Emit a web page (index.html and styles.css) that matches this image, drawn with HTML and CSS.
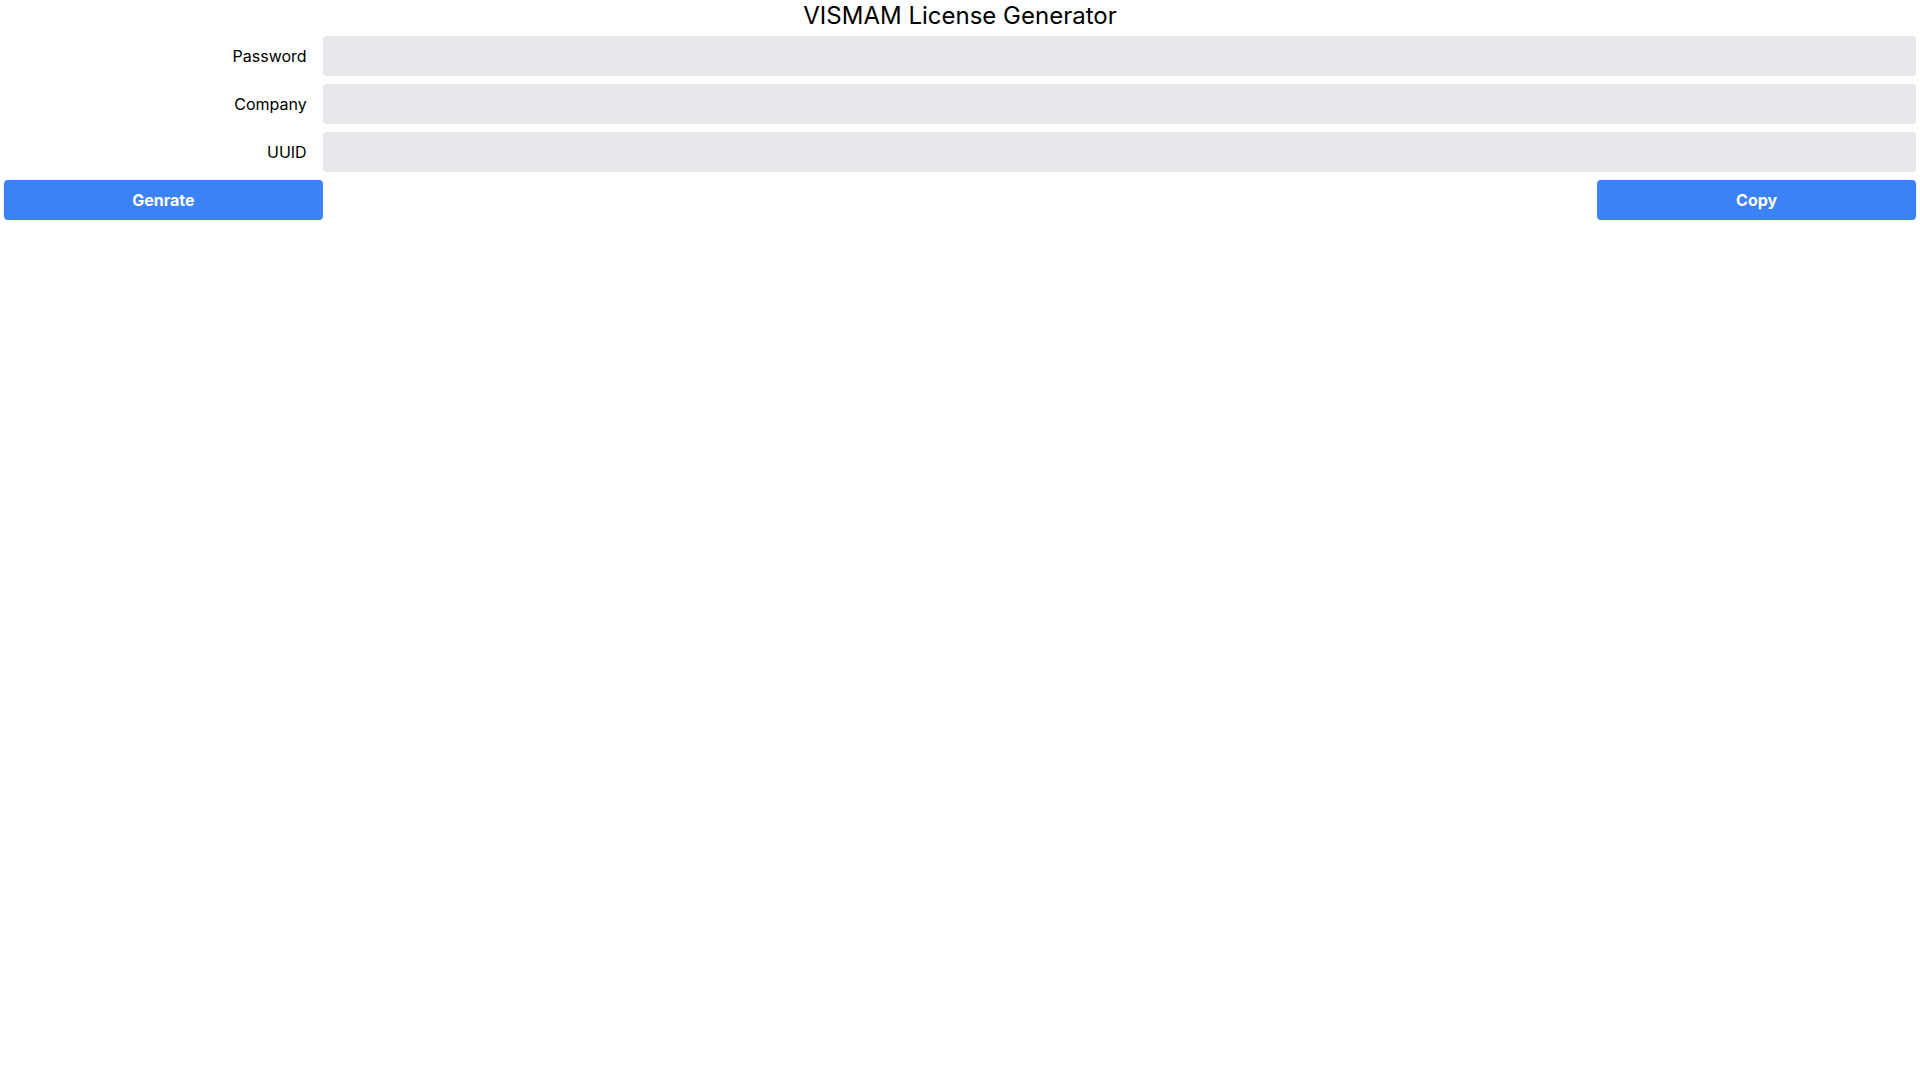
FILE: index.html
```html
<!DOCTYPE html>
<html lang="en">
<head>
<meta charset="utf-8">
<title>VISMAM License Generator</title>
<link rel="stylesheet" href="styles.css">
</head>
<body>
<h1 class="title">VISMAM License Generator</h1>
<form class="form">
  <label class="label" for="pw">Password</label>
  <input class="field" id="pw" type="password">
  <label class="label" for="co">Company</label>
  <input class="field" id="co" type="text">
  <label class="label" for="uu">UUID</label>
  <input class="field" id="uu" type="text">
  <button class="btn btn-gen" type="button">Genrate</button>
  <button class="btn btn-copy" type="button">Copy</button>
</form>
</body>
</html>
```
FILE: styles.css
```css
* { box-sizing: border-box; }
html, body { margin: 0; padding: 0; background: #fff; }
body { font-family: Inter, "Noto Sans", sans-serif; color: #000; }
.title {
  margin: 0;
  font-size: 24px;
  line-height: 32px;
  font-weight: 400;
  text-align: center;
}
.form {
  display: grid;
  grid-template-columns: repeat(6, 1fr);
  row-gap: 8px;
  padding: 4px;
}
.label {
  grid-column: span 1;
  display: flex;
  align-items: center;
  justify-content: flex-end;
  padding-right: 16px;
  font-size: 16px;
  height: 40px;
}
.field {
  grid-column: span 5;
  height: 40px;
  border: 0;
  border-radius: 4px;
  background: #e5e7eb;
  font: inherit;
  padding: 0 8px;
  outline: none;
}
.btn {
  height: 40px;
  border: 0;
  border-radius: 4px;
  background: #3b82f6;
  color: #fff;
  font-family: Inter, "Noto Sans", sans-serif;
  font-size: 16px;
  font-weight: 700;
  cursor: pointer;
}
.btn-gen { grid-column: 1 / 2; }
.btn-copy { grid-column: 6 / 7; }
```
